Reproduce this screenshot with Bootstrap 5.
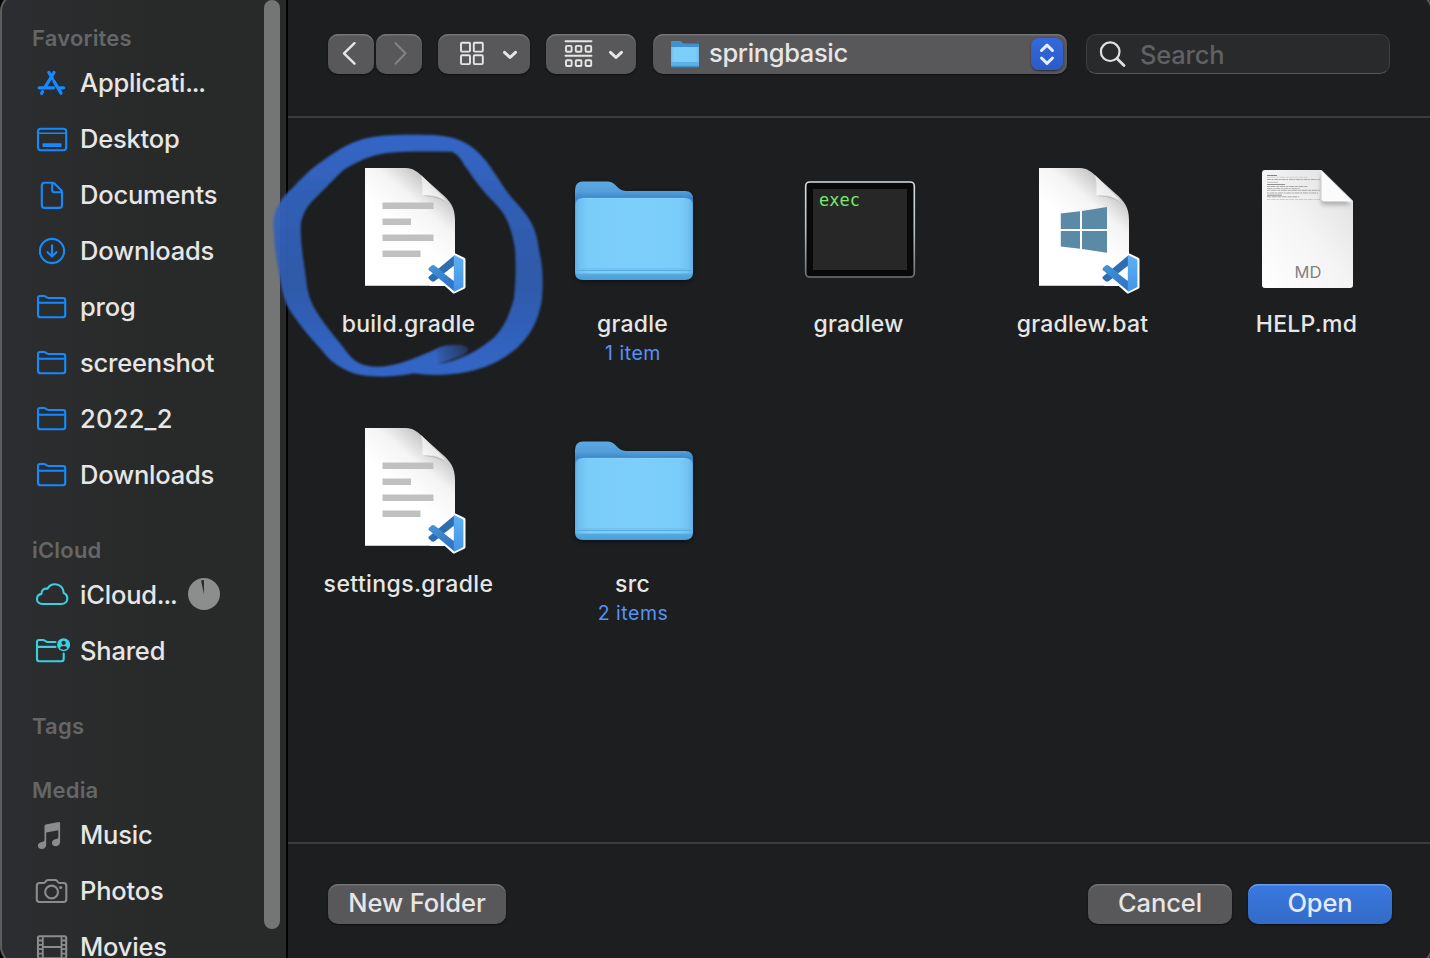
<!DOCTYPE html>
<html lang="en" data-bs-theme="dark">
<head>
<meta charset="utf-8">
<meta name="viewport" content="width=device-width, initial-scale=1">
<title>Open</title>
<link href="https://cdn.jsdelivr.net/npm/bootstrap@5.3.0/dist/css/bootstrap.min.css" rel="stylesheet">
<style>
  body { font-family: Inter, "Noto Sans", sans-serif; background: #1d1e20; color: #e5e5e5; height: 100vh; }
  svg { display: block; flex: none; }
  .window-edge { inset: -8px -3px -8px 0; border: 2px solid #5c5d5f; border-radius: 20px; box-shadow: 0 0 0 20px #060606; pointer-events: none; z-index: 5; }
  .sidebar { width: 288px; flex: none; background: linear-gradient(90deg, #2c2d30, #282a29 55%); border-right: 2px solid #000; }
  .places { padding: 22px 0 0 32px; }
  .group-title { height: 33px; font-size: 22px; font-weight: 600; line-height: 33px; color: #656667; letter-spacing: .2px; margin-top: 31px; }
  .group-title.first { margin-top: 0; }
  .place { height: 56px; padding: 0 0 0 2px; gap: 10px; font-size: 25.5px; font-weight: 500; line-height: 56px; letter-spacing: -.2px; color: #e6e6e6; white-space: nowrap; }
  .place svg { color: #158aff; fill: none; stroke: currentColor; stroke-width: 2.1; stroke-linejoin: round; stroke-linecap: round; }
  .place.cloudy svg { color: #3bcfe4; }
  .place.media svg { color: #8b8c8c; }
  .dots { letter-spacing: -1.2px; }
  .wide { letter-spacing: .25px; }
  .pie { margin: -2px 0 0 2px; }
  .scroll-thumb { width: 16px; height: 929px; margin-right: 6px; border-radius: 8px; background: #747675; flex: none; }
  .toolbar { height: 118px; padding: 34px 40px 0; border-bottom: 2px solid #3b3c3e; }
  .bottom-bar { height: 116px; padding: 40px 38px 0 40px; border-top: 2px solid #3b3c3e; }
  .mac-btn { --bs-btn-padding-x: 0; --bs-btn-padding-y: 0; --bs-btn-border-width: 0; --bs-btn-color: #e6e6e6; --bs-btn-bg: #58585a; --bs-btn-hover-bg: #58585a; --bs-btn-hover-color: #e6e6e6; --bs-btn-disabled-bg: #58585a; --bs-btn-disabled-opacity: 1;
    height: 40px; border-radius: 10px; font-size: 25.5px; font-weight: 500; line-height: 36px; letter-spacing: -.1px; box-shadow: inset 0 1.5px 0 #737475, 0 1px 2px #0008; }
  .bottom-bar .mac-btn { padding-bottom: 2px; }
  .mac-btn.primary { --bs-btn-color: #e2ebfb; background: linear-gradient(#3b79e1, #336bc6); box-shadow: inset 0 1.5px 0 #699bea, 0 1px 2px #0008; }
  .mac-btn svg { fill: none; stroke: #e6e6e6; stroke-linecap: round; stroke-linejoin: round; }
  .nav-key { width: 46px; }
  .path-box { width: 414px; margin-left: 17px; }
  .path-name { margin-left: 9px; padding-bottom: 2px; letter-spacing: -.35px; }
  .stepper { width: 32px; height: 32px; border-radius: 8px; background: linear-gradient(#3568dc, #2a5bc8); box-shadow: 0 1px 2px #0008; }
  .finder { width: 304px; height: 40px; margin-left: 19px; border: 1px solid #3d3e40; border-bottom: 1.5px solid #555658; border-radius: 10px; background: #292a2c; font-size: 25.5px; font-weight: 500; color: #606163; line-height: 38px; }
  .hint { margin-left: 12px; padding-top: 2px; letter-spacing: -.2px; }
  .files { display: grid; grid-template-columns: 224px 224px 228px 220px 228px; grid-auto-rows: 260px; padding: 42px 0 0 10px; }
  .file { text-align: center; }
  .file svg { margin: 0 auto; overflow: visible; }
  .fname { font-size: 23px; font-weight: 500; line-height: 32px; margin-top: 12px; margin-left: -3px; color: #e6e6e6; letter-spacing: .25px; }
  .fcount { font-size: 19.5px; line-height: 26px; color: #5693f5; letter-spacing: .5px; margin-left: -2px; }
  .marker { left: 270px; top: 125px; z-index: 4; pointer-events: none; }
</style>
<script src="https://cdn.jsdelivr.net/npm/bootstrap@5.3.0/dist/js/bootstrap.bundle.min.js"></script>
</head>
<body class="d-flex overflow-hidden position-relative">

<svg width="0" height="0" class="position-absolute" aria-hidden="true">
  <defs>
    <linearGradient id="fBack" x1="0" y1="0" x2="0" y2="1"><stop offset="0" stop-color="#5ba9e2"/><stop offset=".1" stop-color="#549fdb"/><stop offset=".17" stop-color="#3a88cb"/><stop offset=".3" stop-color="#4a9fdc"/><stop offset=".9" stop-color="#57aee5"/><stop offset="1" stop-color="#489fdb"/></linearGradient>
    <linearGradient id="fFront" x1="0" y1="0" x2="1" y2="0"><stop offset="0" stop-color="#62b4e9"/><stop offset=".04" stop-color="#72c2f2"/><stop offset=".12" stop-color="#7bcdf9"/><stop offset=".5" stop-color="#7dcefb"/><stop offset=".88" stop-color="#7bcdf9"/><stop offset=".96" stop-color="#72c2f2"/><stop offset="1" stop-color="#62b4e9"/></linearGradient>
    <linearGradient id="pShade" gradientUnits="userSpaceOnUse" x1="52" y1="66" x2="88" y2="24"><stop offset="0" stop-color="#fff"/><stop offset=".55" stop-color="#f4f4f4"/><stop offset="1" stop-color="#c4c4c4"/></linearGradient>
    <linearGradient id="pCurl" x1="0" y1="1" x2=".6" y2=".3"><stop offset="0" stop-color="#fff"/><stop offset="1" stop-color="#e2e2e2"/></linearGradient>
    <linearGradient id="mdPage" x1="0" y1="1" x2="1" y2="0"><stop offset="0" stop-color="#fff"/><stop offset=".5" stop-color="#f4f4f4"/><stop offset="1" stop-color="#dcdcdc"/></linearGradient>
    <linearGradient id="vR" x1="0" y1="0" x2="0" y2="1"><stop offset="0" stop-color="#5ab2f2"/><stop offset="1" stop-color="#4594e8"/></linearGradient>
    <linearGradient id="vD" x1="0" y1="0" x2="1" y2="1"><stop offset="0" stop-color="#4296d8"/><stop offset="1" stop-color="#2e6fc2"/></linearGradient>
    <linearGradient id="tEdge" x1="0" y1="0" x2="0" y2="1"><stop offset="0" stop-color="#d5dfe5"/><stop offset=".5" stop-color="#b9c4ca"/><stop offset="1" stop-color="#747474"/></linearGradient>
    <linearGradient id="ink" x1="0" y1="0" x2="0" y2="1"><stop offset="0" stop-color="#366cd3"/><stop offset=".25" stop-color="#3364c0"/><stop offset=".6" stop-color="#305eb2"/><stop offset=".88" stop-color="#3468ca"/><stop offset="1" stop-color="#366cd3"/></linearGradient>
    <radialGradient id="tailFade" gradientUnits="userSpaceOnUse" cx="600" cy="664" r="115"><stop offset="0" stop-color="#1d1e20" stop-opacity=".7"/><stop offset="1" stop-color="#1d1e20" stop-opacity="0"/></radialGradient>
    <filter id="soft" x="-5%" y="-5%" width="110%" height="110%"><feGaussianBlur stdDeviation="3"/></filter>
    <filter id="haze" x="-30%" y="-30%" width="160%" height="160%"><feGaussianBlur stdDeviation="2"/></filter>

    <symbol id="s-folder" viewBox="0 0 36 36"><path d="M4 13.3V9Q4 7 6 7H9.8Q11 7 12 7.8L12.8 8.4Q13.6 9 14.7 9H29Q31.2 9 31.2 11.200V26Q31.200 28.200 29 28.200H6.200Q4 28.200 4 26ZM4 13.700H31"/></symbol>
    <symbol id="vscode" viewBox="0 0 40 42">
      <path d="M27 2.500 36.500 7V34.500L27 39 14 27.500 25 12Z" fill="#fff" stroke="#fff" stroke-width="4" stroke-linejoin="round"/>
      <path d="M27.500 2.800 27 14 7.500 28.700Q6 29.600 4.600 28.700L1.800 26.300Q1 25 2 24Z" fill="#2f6cb0"/>
      <path d="M27.500 39 27 28 7.500 13Q6 12.100 4.600 13L1.800 15.400Q1 16.700 2 17.700Z" fill="url(#vD)"/>
      <path d="M26.800 13.300V28.500L17 20.900Z" fill="#fff"/>
      <path d="M26.800 3 27.800 2.800 36.400 7.200V34.400L27.800 38.900 26.800 39Z" fill="url(#vR)"/>
    </symbol>
    <!-- blank document page with a curled corner -->
    <symbol id="page" viewBox="0 0 128 136">
      <path d="M19 8H60C67 8 72 12 77 17L96 34C104 41 109 47 109 60V126H19Z" fill="url(#pShade)"/>
      <path d="M76.500 35.500C86 34 95 37 101 42L96 36 75 15C77 22 76.500 30 76.500 35.500Z" fill="url(#pCurl)"/>
      <path d="M77 36C88 35 97 38 104 47C99 40 90 36 77 36Z" fill="#8e8e8e" opacity=".6"/>
      <path d="M19 125.500H84" stroke="#c9c9c9" stroke-width="1"/>
    </symbol>
    <symbol id="big-folder" viewBox="0 0 128 136">
      <path d="M5 30Q5 22 13 22H38C46 22 47 31 56 31H115Q123 31 123 39V112Q123 120 115 120H13Q5 120 5 112Z" fill="#000" opacity=".5" transform="translate(0 1.500)" filter="url(#haze)"/>
      <path d="M5 30Q5 21.500 13 21.500H38C46 21.500 47 31 56 31H115Q123 31 123 39V112Q123 120 115 120H13Q5 120 5 112Z" fill="url(#fBack)"/>
      <path d="M5.500 45Q5.500 38 13 38H115Q122.500 38 122.500 45V114H5.500Z" fill="url(#fFront)"/>
      <path d="M5.500 108H122.500V111H5.500Z" fill="#6cbcec" opacity=".6"/>
      <path d="M5.500 110.500H122.500M5.500 114H122.500" stroke="#5badde" stroke-width="1"/>
      <path d="M13 38.400H115" stroke="#8ad3fb" stroke-width=".8"/>
    </symbol>
  </defs>
</svg>

<aside class="sidebar d-flex">
  <nav class="places flex-grow-1">
    <div class="group-title first">Favorites</div>
    <div class="place d-flex align-items-center"><svg width="36" height="36"><g stroke-width="3.300"><path d="M20 7.500 10.800 22.600M14.900 7.500 18.500 13.600M20 16.300 27 28.200M5.200 22.800H19.500M25.500 22.800H29.600M8.600 26.800 7.600 28.400"/></g></svg><span>Applicati<span class="dots">...</span></span></div>
    <div class="place d-flex align-items-center"><svg width="36" height="36"><rect x="4" y="7.700" width="28.200" height="21.500" rx="2.600"/><path d="M4 12.200H32" stroke-width="1.500"/><rect x="8.500" y="22.300" width="19" height="3.600" rx=".6" fill="currentColor" stroke="none"/></svg><span>Desktop</span></div>
    <div class="place d-flex align-items-center"><svg width="36" height="36"><path d="M10.500 5.700H18.500Q19.600 5.700 20.400 6.500L27.200 13.300Q28 14.100 28 15.200V28Q28 30.900 25.200 30.900H10.500Q7.800 30.900 7.800 28V8.500Q7.800 5.700 10.500 5.700ZM18.200 6V13.300Q18.200 15.300 20.200 15.300H27.800"/></svg><span>Documents</span></div>
    <div class="place d-flex align-items-center"><svg width="36" height="36"><circle cx="18" cy="18" r="12.100"/><path d="M18 12.300V23.200M13.600 19.200 18 23.500 22.400 19.200"/></svg><span>Downloads</span></div>
    <div class="place d-flex align-items-center"><svg width="36" height="36"><use href="#s-folder"/></svg><span>prog</span></div>
    <div class="place d-flex align-items-center"><svg width="36" height="36"><use href="#s-folder"/></svg><span>screenshot</span></div>
    <div class="place d-flex align-items-center"><svg width="36" height="36"><use href="#s-folder"/></svg><span class="wide">2022_2</span></div>
    <div class="place d-flex align-items-center"><svg width="36" height="36"><use href="#s-folder"/></svg><span>Downloads</span></div>

    <div class="group-title">iCloud</div>
    <div class="place cloudy d-flex align-items-center"><svg width="36" height="36"><path d="M9.200 27C5.500 27 3 24.800 3 22.200 3 19.300 5 17.300 7.500 16.900 7 13.500 10 11 13.500 11.800 15 8.800 18 7.300 21 7.300 26 7.300 29.700 11.200 29.700 16 32 16.900 33.300 19 33.300 21.500 33.300 25 30.700 27 27.200 27Z"/></svg><span>iCloud<span class="dots">...</span></span>
      <svg class="pie" width="32" height="32"><circle cx="16" cy="16" r="16" fill="#8c8d8d" stroke="none"/><path d="M16 16 13 2.400A14 14 0 0 1 16 2Z" fill="#292b2a" stroke="none"/></svg></div>
    <div class="place cloudy d-flex align-items-center"><svg width="36" height="36"><path d="M21.500 9H13.700Q12.600 9 11.800 8.400L11 7.800Q10 7 8.800 7H5Q3 7 3 9V26Q3 28.200 5.200 28.200H27.500Q29.700 28.200 29.700 26V20.500M3 13.900H21.500"/><circle cx="29.600" cy="11.700" r="6.500" fill="currentColor" stroke="none"/><circle cx="29.600" cy="9.800" r="2.100" fill="#282a29" stroke="none"/><path d="M25.800 15.300Q26.500 13.100 29.600 13.100T33.400 15.300Q32 16.700 29.600 16.700T25.800 15.300Z" fill="#282a29" stroke="none"/></svg><span>Shared</span></div>

    <div class="group-title">Tags</div>
    <div class="group-title">Media</div>
    <div class="place media d-flex align-items-center"><svg width="36" height="36"><path d="M10.500 9Q10.500 7.700 11.800 7.400L24.700 5Q26.100 4.800 26.100 6.200V24.500C26.100 27.800 23.800 29.200 21.700 29.200 19.500 29.200 17.900 27.900 17.900 26 17.900 23.500 20 22.500 22 22.100 23.700 21.800 24.300 21.500 24.300 20.300V13.200L12.200 15.600V27.500C12.200 30.500 10 32 7.800 32 5.400 32 3.900 30.500 3.900 28.700 3.900 26.500 5.700 25.400 7.700 25 9.500 24.600 10.500 24.300 10.500 23Z" fill="currentColor" stroke="none"/></svg><span>Music</span></div>
    <div class="place media d-flex align-items-center"><svg width="36" height="36"><path d="M5.500 10H9.200Q10.400 10 11.200 9.100L12.300 7.800Q13.100 7 14.200 7H21Q22.100 7 22.900 7.800L24 9.100Q24.800 10 26 10H29.600Q32.300 10 32.300 12.700V26.300Q32.300 29 29.600 29H5.500Q2.800 29 2.800 26.300V12.700Q2.800 10 5.500 10Z"/><circle cx="17.600" cy="19" r="6.400"/><circle cx="26.700" cy="14.500" r="1.600" fill="currentColor" stroke="none"/></svg><span>Photos</span></div>
    <div class="place media d-flex align-items-center"><svg width="36" height="36"><rect x="4" y="7.300" width="28.200" height="22" rx="1.500"/><path d="M8.800 7.300V29M27.500 7.300V29M8.800 18H27.500M4 11.500H8.800M4 15.800H8.800M4 20.200H8.800M4 24.600H8.800M27.500 11.500H32M27.500 15.800H32M27.500 20.200H32M27.500 24.600H32" stroke-width="1.800"/></svg><span>Movies</span></div>
  </nav>
  <div class="scroll-thumb"></div>
</aside>

<main class="d-flex flex-column flex-grow-1">
  <header class="toolbar d-flex">
    <button class="btn mac-btn nav-key" aria-label="Back"><svg width="46" height="40"><path d="M26.500 9.200 16 19.300 26.500 29.700" stroke-width="2.400"/></svg></button>
    <button class="btn mac-btn nav-key" aria-label="Forward" disabled style="margin-left:2px"><svg width="46" height="40"><path d="M19.500 9.200 29.500 19.300 19.500 29.700" stroke-width="2.100" stroke="#828283"/></svg></button>
    <button class="btn mac-btn ms-3" aria-label="Icon view"><svg width="92" height="40"><g stroke-width="1.900"><rect x="23" y="8.800" width="9" height="8.800" rx="1"/><rect x="35.800" y="8.800" width="9" height="8.800" rx="1"/><rect x="23" y="21.300" width="9" height="8.800" rx="1"/><rect x="35.800" y="21.300" width="9" height="8.800" rx="1"/></g><path d="M66.500 18.300 72 23.500 77.500 18.300" stroke-width="3"/></svg></button>
    <button class="btn mac-btn ms-3" aria-label="Group items"><svg width="90" height="40"><g stroke-width="1.900"><path d="M19.500 7.300H45.500M19.500 21.800H45.500"/><rect x="20" y="11.900" width="5.600" height="5.800" rx="1"/><rect x="29.800" y="11.900" width="5.600" height="5.800" rx="1"/><rect x="39.600" y="11.900" width="5.600" height="5.800" rx="1"/><rect x="20" y="26.200" width="5.600" height="5.800" rx="1"/><rect x="29.800" y="26.200" width="5.600" height="5.800" rx="1"/><rect x="39.600" y="26.200" width="5.600" height="5.800" rx="1"/></g><path d="M64.500 18.300 70 23.500 75.500 18.300" stroke-width="3"/></svg></button>
    <button class="btn mac-btn path-box d-flex align-items-center">
      <svg width="30" height="32" viewBox="0 0 30 32" style="margin-left:17px"><g stroke="none"><path d="M1 4Q1 3 2 3H10.500L13.500 5.500H28Q29 5.500 29 6.500V28Q29 29.300 28 29.300H2Q1 29.300 1 28Z" fill="#3f92d0"/><path d="M1 9H29V25.500H1Z" fill="url(#fFront)"/><path d="M1 24H29V27.800H1Z" fill="#5cb0e4"/></g></svg>
      <span class="path-name">springbasic</span>
      <span class="stepper ms-auto me-1"><svg width="32" height="32"><path d="M10.500 12.500 16 7.200 21.500 12.500M10.500 20 16 25.300 21.500 20" stroke-width="3" stroke="#e6edfb"/></svg></span>
    </button>
    <div class="finder d-flex align-items-center"><svg width="30" height="30" style="margin-left:11px" fill="none" stroke="#e0e0e0" stroke-linecap="round"><circle cx="12.200" cy="12.700" r="9.300" stroke-width="2.200"/><path d="M19.200 19.800 26 26.500" stroke-width="2.800"/></svg><span class="hint">Search</span></div>
  </header>

  <section class="files flex-grow-1">
    <div class="file"><svg width="128" height="136"><use href="#page"/><g fill="#bfc1c0"><path d="M36.500 42.500H87.500V49H36.500ZM36.500 58.500H65V65H36.500ZM36.500 74.500H87.500V81H36.500ZM36.500 90.500H74.500V97H36.500Z"/></g><use href="#vscode" x="81" y="92.500" width="40" height="42"/></svg><div class="fname">build.gradle</div></div>
    <div class="file"><svg width="128" height="136"><use href="#big-folder"/></svg><div class="fname">gradle</div><div class="fcount">1 item</div></div>
    <div class="file"><svg width="128" height="136"><rect x="9.700" y="22" width="108.600" height="95" rx="4" fill="#090909" stroke="url(#tEdge)" stroke-width="1.600"/><rect x="17" y="29" width="94" height="81" fill="#272727"/><text x="23" y="46" font-family="DejaVu Sans Mono" font-size="17" fill="#74ea70">exec</text></svg><div class="fname">gradlew</div></div>
    <div class="file"><svg width="128" height="136"><use href="#page"/><path d="M40.800 53.500 60 51.200V69H40.800ZM62 51 87 47V69H62ZM40.800 71H60V88.800L40.800 86.500ZM62 71H87V92.800L62 89Z" fill="#5b8aa6"/><use href="#vscode" x="81" y="92.500" width="40" height="42"/></svg><div class="fname">gradlew.bat</div></div>
    <div class="file"><svg width="128" height="136"><path d="M21 10H77L109 41V125Q109 128 106 128H21Q18 128 18 125V13Q18 10 21 10Z" fill="url(#mdPage)"/>
      <g stroke="#888" stroke-width=".7"><path d="M23 15.500H33" stroke="#555"/><path d="M23 17.300H64" stroke-dasharray="3 .6 5 .7" opacity=".5"/><path d="M23 19.500H76" stroke-dasharray="4 .6 2 .7"/><path d="M23 22.300H34" opacity=".7"/><path d="M23 24.500H41" stroke="#666"/><path d="M23 26.500H64" stroke-dasharray="3 .6 5 .7"/><path d="M23 28.500H56" stroke-dasharray="5 .6 2 .7" opacity=".8"/><path d="M23 30.300H76" stroke-dasharray="3 .6 6 .7"/><path d="M23 33H74" stroke-dasharray="2 .6 5 .7"/><path d="M23 35.200H38" stroke="#666"/><path d="M23 36.800H55" stroke-dasharray="4 .6 5 .7"/><path d="M23 39.500H76" stroke-dasharray="3 .6 5 .7" opacity=".5"/></g>
      <path d="M77 13V42Q77 45 80 45H107Z" fill="#777" opacity=".5" filter="url(#haze)"/><path d="M77.500 10V38.500Q77.500 41.500 80.500 41.500H109Z" fill="#fbfbfb"/><path d="M77 10 109 41.500" stroke="#ccc" stroke-width=".8"/>
      <text x="64" y="118" text-anchor="middle" font-size="16.500" fill="#828282" letter-spacing="0">MD</text></svg><div class="fname">HELP.md</div></div>
    <div class="file"><svg width="128" height="136"><use href="#page"/><g fill="#bfc1c0"><path d="M36.500 42.500H87.500V49H36.500ZM36.500 58.500H65V65H36.500ZM36.500 74.500H87.500V81H36.500ZM36.500 90.500H74.500V97H36.500Z"/></g><use href="#vscode" x="81" y="92.500" width="40" height="42"/></svg><div class="fname" style="letter-spacing:.4px">settings.gradle</div></div>
    <div class="file"><svg width="128" height="136"><use href="#big-folder"/></svg><div class="fname">src</div><div class="fcount">2 items</div></div>
  </section>

  <footer class="bottom-bar d-flex">
    <button class="btn mac-btn" style="width:178px">New Folder</button>
    <button class="btn mac-btn ms-auto" style="width:144px">Cancel</button>
    <button class="btn mac-btn primary ms-3" style="width:144px">Open</button>
  </footer>
</main>

<!-- hand-drawn marker ring around the first file -->
<svg class="marker position-absolute" width="280" height="265" viewBox="0 0 840 795"><path filter="url(#soft)" fill="url(#ink)" opacity=".94" fill-rule="evenodd" d="M10 300C10 260 25 235 50 205 80 180 100 150 140 120 190 85 230 55 280 42 350 25 430 30 490 30 570 35 610 60 650 110 690 165 700 190 740 235 790 290 800 320 808 380 820 430 820 480 815 530 800 600 780 630 740 670 680 720 620 740 540 748 500 752 470 750 430 745 380 756 300 760 250 745 190 720 175 700 150 670 110 625 80 590 50 540 30 480 25 430 15 370ZM92 310C92 280 105 250 130 225 160 195 190 165 220 135 260 110 300 92 350 84 420 77 480 80 545 80 570 90 575 110 590 130 620 175 640 200 675 235 710 270 725 310 735 370 738 420 738 460 732 520 715 580 700 610 670 640 620 680 570 708 500 718 540 705 580 695 592 680 600 668 585 658 555 660 520 658 505 668 480 680 430 700 380 725 320 725 280 725 250 710 230 680 200 640 180 620 160 590 125 545 112 510 108 460 100 400 92 360 92 310Z"/><path d="M500 655H600L598 682 560 702 500 716Z" fill="url(#tailFade)"/></svg>
<div class="window-edge position-absolute"></div>
</body>
</html>
